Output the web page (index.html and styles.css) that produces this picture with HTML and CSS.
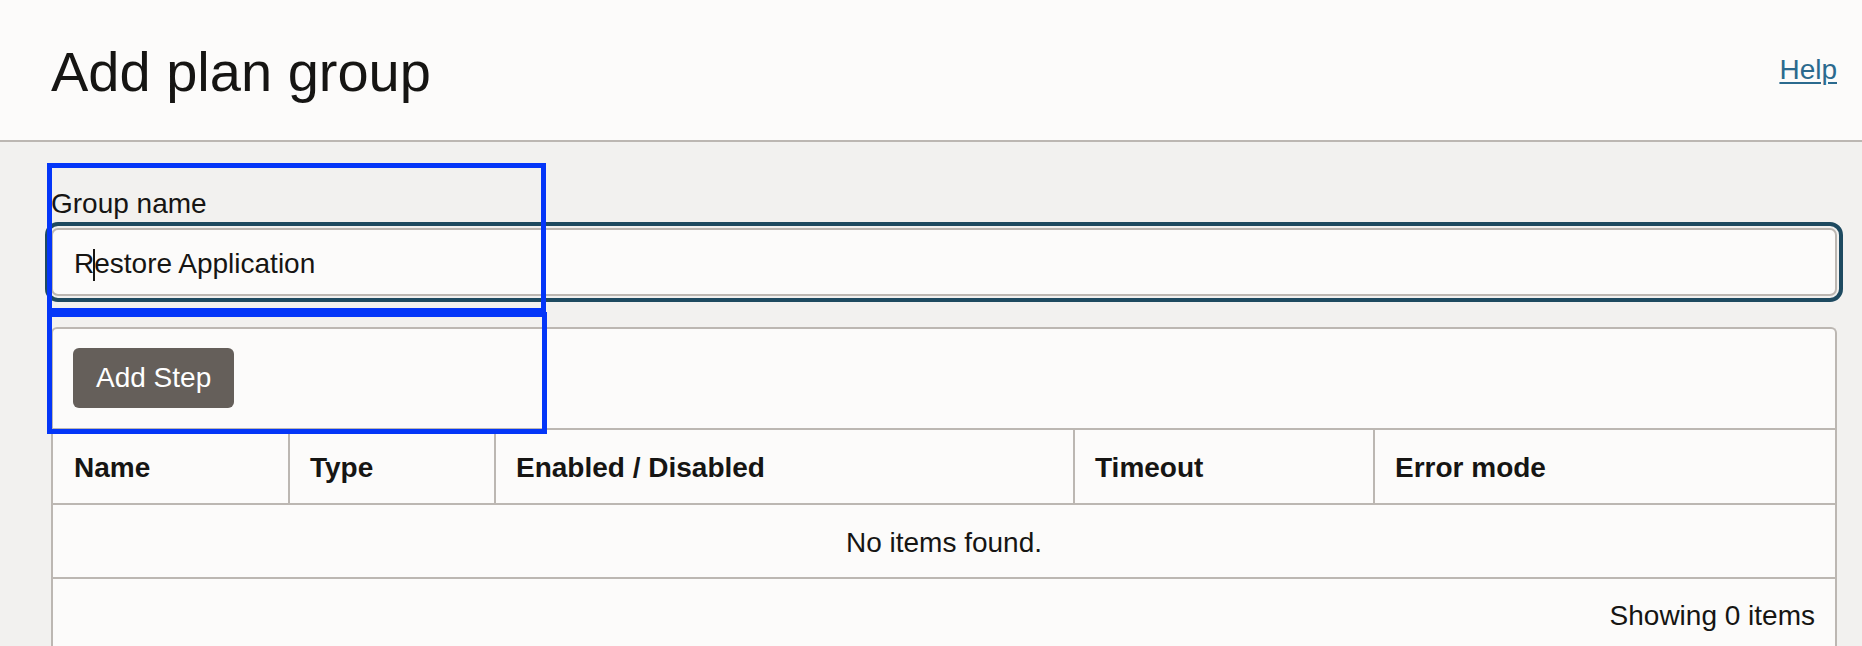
FILE: index.html
```html
<!DOCTYPE html>
<html lang="en">
<head>
<meta charset="utf-8">
<title>Add plan group</title>
<link rel="stylesheet" href="styles.css">
</head>
<body>
<header class="page-header">
  <h1 class="page-title">Add plan group</h1>
  <a class="help-link" href="#">Help</a>
</header>
<main class="content">
  <div class="field">
    <label class="field-label">Group name</label>
    <div class="text-input">R<span class="caret"></span>estore Application</div>
  </div>
  <section class="panel">
    <div class="toolbar">
      <button class="btn" type="button">Add Step</button>
    </div>
    <div class="grid-table">
      <div class="row head">
        <div class="cell">Name</div>
        <div class="cell">Type</div>
        <div class="cell">Enabled / Disabled</div>
        <div class="cell">Timeout</div>
        <div class="cell">Error mode</div>
      </div>
      <div class="row empty">No items found.</div>
      <div class="table-footer">Showing 0 items</div>
    </div>
  </section>
  <div class="annot annot-field"></div>
  <div class="annot annot-toolbar"></div>
</main>
</body>
</html>
```
FILE: styles.css
```css
html, body {
  margin: 0;
  padding: 0;
  overflow: hidden;
}
body {
  background: #f2f1ef;
  color: #161513;
  font-family: "Liberation Sans", Arial, sans-serif;
  font-size: 28px;
  line-height: 32px;
  position: relative;
  height: 646px;
}
.page-header {
  height: 140px;
  background: #fcfbfa;
  border-bottom: 2px solid #bcb7b2;
  display: flex;
  align-items: center;
  justify-content: space-between;
  padding: 0 25px 0 51px;
}
.page-title {
  margin: 3px 0 0;
  font-size: 56px;
  line-height: 64px;
  font-weight: normal;
}
.help-link {
  color: #2b6a8e;
  text-decoration: underline;
  text-decoration-thickness: 2px;
  text-underline-offset: 3px;
}
.content {
  padding: 46px 25px 0 51px;
}
.field-label {
  display: block;
  margin-bottom: 8px;
}
.text-input {
  height: 68px;
  box-sizing: border-box;
  border: 2px solid #bcb7b2;
  border-radius: 7px;
  background: #fcfbfa;
  padding: 4px 20px 0 21px;
  line-height: 60px;
  outline: 4px solid #1e4a60;
  outline-offset: 2px;
  white-space: nowrap;
}
.caret {
  display: inline-block;
  width: 0;
  height: 32px;
  border-left: 2px solid #161513;
  vertical-align: -8px;
  margin: 0 -1px;
}
.panel {
  margin-top: 31px;
  background: #fcfbfa;
  border: 2px solid #bcb7b2;
  border-bottom: none;
  border-radius: 6px 6px 0 0;
}
.toolbar {
  padding: 19px 20px 20px;
}
.btn {
  height: 60px;
  padding: 0 23px;
  border: none;
  border-radius: 6px;
  background: #655f5a;
  color: #ffffff;
  font-family: inherit;
  font-size: 28px;
  line-height: 32px;
}
.grid-table {
  border-top: 2px solid #bcb7b2;
}
.row {
  border-bottom: 2px solid #bcb7b2;
}
.head {
  display: grid;
  grid-template-columns: 235px 206px 579px 300px 1fr;
  height: 73px;
  font-weight: bold;
}
.head .cell {
  display: flex;
  align-items: center;
  padding: 3px 20px 0;
}
.head .cell:first-child {
  padding-left: 21px;
}
.head .cell + .cell {
  border-left: 2px solid #bcb7b2;
}
.empty {
  height: 74px;
  display: flex;
  align-items: center;
  justify-content: center;
  padding-top: 3px;
  box-sizing: border-box;
}
.table-footer {
  padding: 21px 20px 21px;
  text-align: right;
}
.annot {
  position: absolute;
  border: 5px solid #0436f8;
  box-sizing: border-box;
}
.annot-field {
  left: 47px;
  top: 163px;
  width: 499px;
  height: 150px;
}
.annot-toolbar {
  left: 47px;
  top: 312px;
  width: 500px;
  height: 122px;
}
```
